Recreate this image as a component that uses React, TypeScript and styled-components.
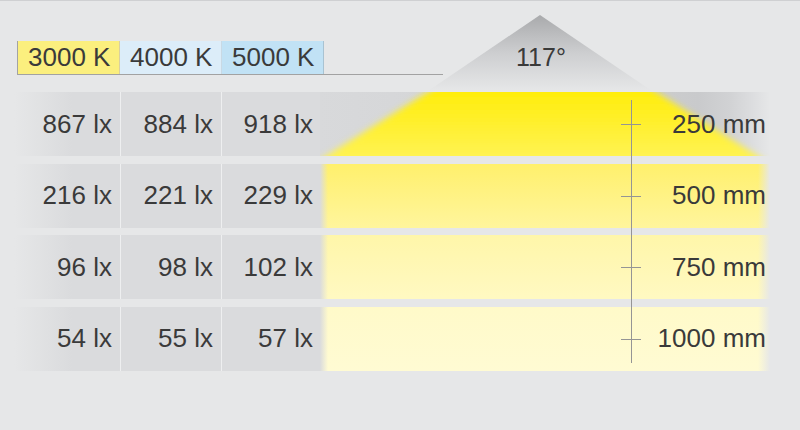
import React from 'react';
import styled, { createGlobalStyle } from 'styled-components';

const GlobalStyle = createGlobalStyle`
  html, body { margin: 0; padding: 0; background: #e6e7e8; }
  body { font-family: "Liberation Sans", Arial, Helvetica, sans-serif; color: #3a3a3a; }
`;

const Page = styled.div`
  position: relative;
  width: 800px;
  height: 430px;
  box-sizing: border-box;
  border-top: 1px solid #cfd0d2;
  background: #e6e7e8;
  overflow: hidden;
  padding-top: 40px;
`;

const Header = styled.div`
  display: flex;
  align-items: flex-end;
  margin-left: 17px;
  height: 34px;
`;

const TabGroup = styled.div`
  display: flex;
  border-left: 1px solid #a3a3a3;
  border-bottom: 1px solid #a2a2a2;
`;

const Tab = styled.div<{ $bg: string; $edge: string }>`
  box-sizing: border-box;
  width: 102px;
  height: 33px;
  padding: 0 6px 0 10px;
  font-size: 26px;
  line-height: 33px;
  white-space: nowrap;
  background: ${(p) => p.$bg};
  border-right: 1px solid ${(p) => p.$edge};
`;

const Rule = styled.div`
  width: 119px;
  height: 33px;
  border-bottom: 1px solid #a2a2a2;
`;

const AngleBadge = styled.div`
  position: absolute;
  left: 428px;
  top: 14px;
  width: 224px;
  height: 76px;
  display: flex;
  justify-content: center;
  box-sizing: border-box;
  padding-top: 27px;
  padding-left: 2px;
`;

const BadgeShape = styled.svg`
  position: absolute;
  left: 0;
  top: 0;
`;

const BadgeLabel = styled.span`
  position: relative;
  font-size: 25px;
  line-height: 30px;
`;

const Table = styled.div`
  position: relative;
  display: flex;
  flex-direction: column;
  gap: 7.67px;
  margin-top: 17px;
  width: 800px;
`;

const Row = styled.div`
  display: flex;
  height: 64px;
`;

const Cell = styled.div<{ $w: number; $pr: number; $fade?: boolean }>`
  flex: 0 0 ${(p) => p.$w}px;
  box-sizing: border-box;
  display: flex;
  align-items: center;
  justify-content: flex-end;
  padding-right: ${(p) => p.$pr}px;
  font-size: 26px;
  white-space: nowrap;
  background: ${(p) =>
    p.$fade ? 'linear-gradient(to right, #e6e7e8 14px, #dadbdd 72px)' : '#dadbdd'};
  & + & {
    border-left: 1px solid #eeeff0;
  }
`;

const LightArea = styled.div<{ $top?: string; $bottom?: string; $cone?: boolean }>`
  position: relative;
  flex: 0 0 450px;
  box-sizing: border-box;
  display: flex;
  align-items: center;
  justify-content: flex-end;
  padding-right: 4px;
  overflow: hidden;
  background: ${(p) =>
    p.$cone
      ? 'linear-gradient(to right, #d8d9db 0%, #d3d4d6 40%, #cbcccd 78%, #c9cacc 84%, #d1d2d4 91%, #dcdddf 96%, #e6e7e8 100%)'
      : `linear-gradient(to right, #dadbdd 0px, rgba(218,219,221,0) 8px),
         linear-gradient(to left, #e6e7e8 0px, rgba(230,231,232,0) 12px),
         linear-gradient(to bottom, ${p.$top}, ${p.$bottom})`};
`;

const Cone = styled.svg`
  position: absolute;
  left: 0;
  top: 0;
`;

const Distance = styled.span`
  position: relative;
  font-size: 26px;
  white-space: nowrap;
`;

const Axis = styled.svg`
  position: absolute;
  left: 620px;
  top: 0;
`;

const tabs = [
  { label: '3000 K', bg: '#fbef7e', edge: '#d9d0a0' },
  { label: '4000 K', bg: '#dcedf9', edge: '#c9d9e4' },
  { label: '5000 K', bg: '#c1e2f5', edge: '#a9c3d2' },
];

const rows = [
  { lx: ['867 lx', '884 lx', '918 lx'], mm: '250 mm', cone: true },
  { lx: ['216 lx', '221 lx', '229 lx'], mm: '500 mm', top: '#fff06c', bottom: '#fff59d' },
  { lx: ['96 lx', '98 lx', '102 lx'], mm: '750 mm', top: '#fff6a9', bottom: '#fff9c2' },
  { lx: ['54 lx', '55 lx', '57 lx'], mm: '1000 mm', top: '#fffac9', bottom: '#fffbd3' },
];

const ROW_PITCH = 64 + 7.67;

export default function App() {
  return (
    <>
      <GlobalStyle />
      <Page>
        <Header>
          <TabGroup>
            {tabs.map((t) => (
              <Tab key={t.label} $bg={t.bg} $edge={t.edge}>
                {t.label}
              </Tab>
            ))}
          </TabGroup>
          <Rule />
        </Header>

        <AngleBadge>
          <BadgeShape width="224" height="76" viewBox="0 0 224 76">
            <defs>
              <linearGradient id="badgeFill" x1="0" y1="0" x2="0" y2="1">
                <stop offset="0" stopColor="#a9aaac" />
                <stop offset="0.5" stopColor="#cdced0" />
                <stop offset="1" stopColor="#e6e7e8" />
              </linearGradient>
            </defs>
            <polygon points="112,0 0,76 224,76" fill="url(#badgeFill)" />
          </BadgeShape>
          <BadgeLabel>117°</BadgeLabel>
        </AngleBadge>

        <Table>
          {rows.map((r) => (
            <Row key={r.mm}>
              <Cell $w={120} $pr={8} $fade>
                {r.lx[0]}
              </Cell>
              <Cell $w={101} $pr={8}>
                {r.lx[1]}
              </Cell>
              <Cell $w={99} $pr={7}>
                {r.lx[2]}
              </Cell>
              <LightArea $cone={r.cone} $top={r.top} $bottom={r.bottom}>
                {r.cone && (
                  <Cone width="450" height="64" viewBox="0 0 450 64">
                    <defs>
                      <linearGradient id="coneFill" x1="0" y1="0" x2="0" y2="1">
                        <stop offset="0" stopColor="#ffec00" />
                        <stop offset="1" stopColor="#fff45e" />
                      </linearGradient>
                      <filter id="coneBlur" x="-20%" y="-20%" width="140%" height="140%">
                        <feGaussianBlur stdDeviation="3" />
                      </filter>
                    </defs>
                    <polygon
                      points="127,-12 317,-12 457,76 -13,76"
                      fill="url(#coneFill)"
                      filter="url(#coneBlur)"
                    />
                  </Cone>
                )}
                <Distance>{r.mm}</Distance>
              </LightArea>
            </Row>
          ))}
          <Axis width="22" height="290" viewBox="0 0 22 290">
            <line x1="11.5" y1="8" x2="11.5" y2="271" stroke="#959595" strokeWidth="1" />
            {rows.map((r, i) => {
              const y = Math.round(32 + i * ROW_PITCH) + 0.5;
              return (
                <line key={r.mm} x1="1" y1={y} x2="21" y2={y} stroke="#959595" strokeWidth="1" />
              );
            })}
          </Axis>
        </Table>
      </Page>
    </>
  );
}
